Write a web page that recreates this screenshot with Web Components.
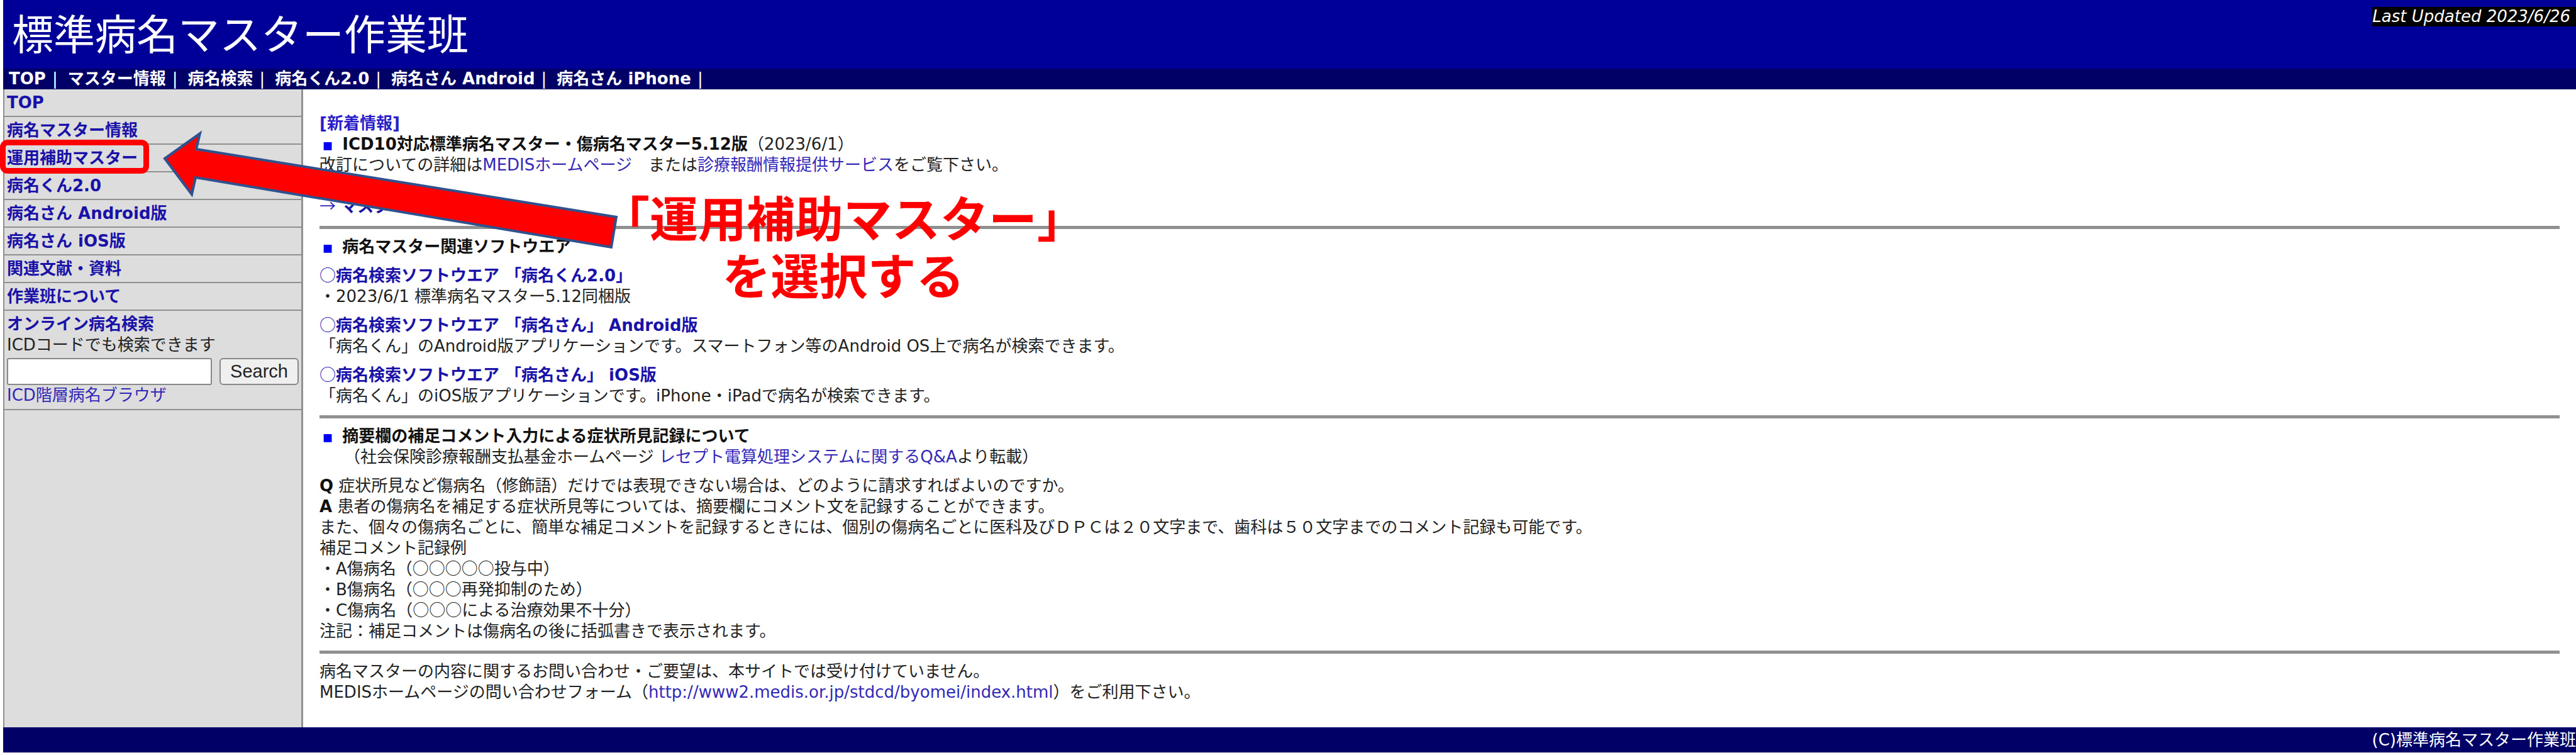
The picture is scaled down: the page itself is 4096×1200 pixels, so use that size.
<!DOCTYPE html>
<html lang="ja">
<head>
<meta charset="utf-8">
<title>標準病名マスター作業班</title>
<style>
html, body { margin: 0; }
body {
  background: #fff; color: #222;
  --wide: "Noto Sans CJK JP", sans-serif;
  font: 26px/33px "DejaVu Sans", "Noto Sans CJK JP", sans-serif;
}
</style>
</head>
<body>
<master-page></master-page>

<script>
const define = (name, html) => {
  const tpl = document.createElement('template');
  tpl.innerHTML = html;
  customElements.define(name, class extends HTMLElement {
    constructor() {
      super();
      this.attachShadow({ mode: 'open' }).append(tpl.content.cloneNode(true));
    }
  });
};

define('site-header', `
<style>
:host { display: block; color: #fff; background: #009; }
.bar { display: flex; justify-content: space-between; align-items: flex-start; height: 109px; }
h1 { margin: 0; padding: 4px 0 0 14px; font: 400 66px/92px var(--wide); }
.updated { margin-top: 11px; padding-right: 9px; background: #000; font-style: italic; line-height: 31px; }
nav { display: flex; background: #006; padding-left: 9px; }
</style>
<div class="bar"><h1>標準病名マスター作業班</h1><div class="updated">Last Updated 2023/6/26</div></div>
<nav><slot></slot></nav>`);

define('nav-item', `
<style>
:host { display: flex; gap: 10px; padding-right: 16px; }
a { color: inherit; text-decoration: none; font-weight: 700; }
</style>
<a href="#"><slot></slot></a><span>|</span>`);

define('side-item', `
<style>
:host { display: block; padding: 5px 4px 4px; border-bottom: 2px solid #909090; font-weight: 700; }
a { color: #1a12a8; text-decoration: none; }
</style>
<a href="#"><slot></slot></a>`);

define('side-search', `
<style>
:host { display: block; padding: 5px 4px; border-bottom: 2px solid #909090; }
a { display: block; color: #3328b8; text-decoration: none; }
a.title { color: #1a12a8; font-weight: 700; }
form { display: flex; gap: 12px; margin: 4px 0 0; }
label { display: block; }
input { flex: 1; min-width: 0; box-sizing: border-box; height: 43px; border: 2px solid #888; border-radius: 3px; background: #fff; padding: 0 6px; font: inherit; }
button { box-sizing: border-box; width: 126px; height: 43px; padding: 0; border: 2px solid #888; border-radius: 6px; background: #efefef; color: #222; font: 29px "Liberation Sans", sans-serif; }
</style>
<a class="title" href="#">オンライン病名検索</a>
<label for="q">ICDコードでも検索できます</label>
<form><input id="q" type="text"><button type="button">Search</button></form>
<a href="#">ICD階層病名ブラウザ</a>`);

define('side-menu', `
<style>
:host { display: block; box-sizing: border-box; width: 477px; background: #ddd; border: solid #909090; border-width: 0 3px 0 2px; }
</style>
<slot></slot>`);

define('square-mark', `
<style>
:host { display: inline-block; width: 28px; text-indent: 5px; font: 400 16px/16px var(--wide); color: #0000f0; }
</style>■`);

define('main-content', `
<style>
:host { display: block; flex: 1; padding: 38px 26px 24px; }
p { margin: 0 0 13px; }
hr { margin: 14px 0 12px; height: 5px; border: 0; background: #909090; }
p:has(+ hr), p:last-child { margin-bottom: 0; }
a { color: #3328b8; text-decoration: none; }
b { color: #111; }
a b { color: #1a12a8; }
b.news { color: #2a1ec8; }
.w { font-family: var(--wide); line-height: 1; }
</style>
<p><b class="news">[新着情報]</b><br>
<square-mark></square-mark> <b>ICD10対応標準病名マスター・傷病名マスター5.12版</b>（2023/6/1）<br>
改訂についての詳細は<a href="#">MEDISホームページ</a>　または<a href="#">診療報酬情報提供サービス</a>をご覧下さい。<br>
<br>
<a href="#"><span class="w">→</span> <b>マスター</b></a></p>
<hr>
<p><square-mark></square-mark> <b>病名マスター関連ソフトウエア</b></p>
<p><a href="#"><span class="w">○</span><b>病名検索ソフトウエア 「病名くん2.0」</b></a><br>
・2023/6/1 標準病名マスター5.12同梱版</p>
<p><a href="#"><span class="w">○</span><b>病名検索ソフトウエア 「病名さん」 Android版</b></a><br>
「病名くん」のAndroid版アプリケーションです。スマートフォン等のAndroid OS上で病名が検索できます。</p>
<p><a href="#"><span class="w">○</span><b>病名検索ソフトウエア 「病名さん」 iOS版</b></a><br>
「病名くん」のiOS版アプリケーションです。iPhone・iPadで病名が検索できます。</p>
<hr>
<p><square-mark></square-mark> <b>摘要欄の補足コメント入力による症状所見記録について</b><br>
　　（社会保険診療報酬支払基金ホームページ <a href="#">レセプト電算処理システムに関するQ&amp;A</a>より転載）</p>
<p><b>Q</b> 症状所見など傷病名（修飾語）だけでは表現できない場合は、どのように請求すればよいのですか。<br>
<b>A</b> 患者の傷病名を補足する症状所見等については、摘要欄にコメント文を記録することができます。<br>
また、個々の傷病名ごとに、簡単な補足コメントを記録するときには、個別の傷病名ごとに医科及びＤＰＣは２０文字まで、歯科は５０文字までのコメント記録も可能です。<br>
補足コメント記録例<br>
・A傷病名（<span class="w">○○○○○</span>投与中）<br>
・B傷病名（<span class="w">○○○</span>再発抑制のため）<br>
・C傷病名（<span class="w">○○○</span>による治療効果不十分）<br>
注記：補足コメントは傷病名の後に括弧書きで表示されます。</p>
<hr>
<p>病名マスターの内容に関するお問い合わせ・ご要望は、本サイトでは受け付けていません。<br>
MEDISホームページの問い合わせフォーム（<a href="#">http://www2.medis.or.jp/stdcd/byomei/index.html</a>）をご利用下さい。</p>`);

define('site-footer', `
<style>
:host { display: block; background: #006; color: #fff; text-align: right; line-height: 40px; white-space: nowrap; }
</style>
<slot></slot>`);

define('callout-layer', `
<style>
:host { position: absolute; inset: 0; overflow: hidden; pointer-events: none; }
.frame { position: absolute; box-sizing: border-box; left: 0; top: 222px; width: 237px; height: 54px; border: 9px solid #f00; border-radius: 12px; }
svg { position: absolute; left: 0; top: 0; }
.note { position: absolute; left: 956px; top: 305px; text-align: center; color: #f00; font: 700 77px/91px "Liberation Sans", "Noto Sans CJK JP", sans-serif; white-space: nowrap; }
</style>
<div class="frame"></div>
<svg width="1000" height="420" aria-hidden="true"><path d="M262 252 L318 212 L312 237 L980 345 L972 393 L311 282 L305 309 Z" fill="#f00" stroke="#2f528f" stroke-width="4" stroke-miterlimit="8"/></svg>
<div class="note">「運用補助マスター」<br>を選択する</div>`);

define('master-page', `
<style>
:host { display: flex; flex-direction: column; position: relative; box-sizing: border-box; min-height: 100vh; padding: 0 0 4px 5px; }
.body { display: flex; flex: 1; }
</style>
<site-header>
  <nav-item>TOP</nav-item><nav-item>マスター情報</nav-item><nav-item>病名検索</nav-item><nav-item>病名くん2.0</nav-item><nav-item>病名さん Android</nav-item><nav-item>病名さん iPhone</nav-item>
</site-header>
<div class="body">
  <side-menu>
    <side-item>TOP</side-item><side-item>病名マスター情報</side-item><side-item>運用補助マスター</side-item><side-item>病名くん2.0</side-item><side-item>病名さん Android版</side-item><side-item>病名さん iOS版</side-item><side-item>関連文献・資料</side-item><side-item>作業班について</side-item>
    <side-search></side-search>
  </side-menu>
  <main-content></main-content>
</div>
<site-footer>(C)標準病名マスター作業班</site-footer>
<callout-layer></callout-layer>`);
</script>
</body>
</html>
